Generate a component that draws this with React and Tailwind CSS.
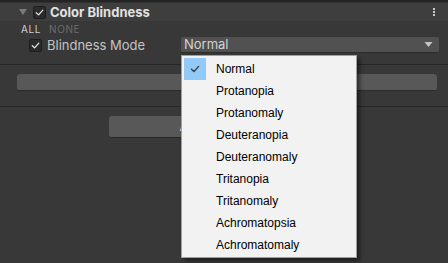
import React from 'react';

const MODES = [
  'Normal',
  'Protanopia',
  'Protanomaly',
  'Deuteranopia',
  'Deuteranomaly',
  'Tritanopia',
  'Tritanomaly',
  'Achromatopsia',
  'Achromatomaly',
];

function Check({ className = '' }) {
  return (
    <svg viewBox="0 0 12 12" className={className} fill="none">
      <path d="M2.5 6.2 L5 8.6 L9.6 3.4" stroke="currentColor" strokeWidth="1.4" strokeLinecap="round" strokeLinejoin="round" />
    </svg>
  );
}

function Toggle() {
  return (
    <div className="w-[13px] h-[13px] rounded-[2px] bg-[#2b2b2b] border border-[#1e1e1e] flex items-center justify-center text-[#e4e4e4]">
      <Check className="w-[11px] h-[11px]" />
    </div>
  );
}

export default function App() {
  return (
    <div className="relative w-[448px] h-[263px] overflow-hidden bg-[#383838]" style={{ fontFamily: 'Inter, "Noto Sans", sans-serif' }}>
      {/* top rule */}
      <div className="h-[3px] bg-[#242424] border-b border-[#303030]" />

      {/* Header */}
      <div className="h-[18px] bg-[#3e3e3e] flex items-center">
        <div className="w-[19px]" />
        <svg viewBox="0 0 8 6" className="w-[8px] h-[6px] text-[#7a7a7a]">
          <path d="M0 0 H8 L4 6 Z" fill="currentColor" />
        </svg>
        <div className="w-[6px]" />
        <Toggle />
        <span className="ml-[4px] text-[13px] font-bold text-[#e2e2e2] leading-none">Color Blindness</span>
        <div className="ml-auto mr-[13px] flex flex-col gap-[1px]">
          <span className="w-[2px] h-[2px] bg-[#c8c8c8]" />
          <span className="w-[2px] h-[2px] bg-[#c8c8c8]" />
          <span className="w-[2px] h-[2px] bg-[#c8c8c8]" />
        </div>
      </div>

      {/* ALL / NONE */}
      <div className="h-[16px] flex items-center pl-[21px] gap-[8px] text-[10px] tracking-[0.06em] leading-none">
        <span className="text-[#cfcfcf]">ALL</span>
        <span className="text-[#6c6c6c]">NONE</span>
      </div>

      {/* Blindness Mode row */}
      <div className="h-[16px] flex items-center pl-[29px]">
        <Toggle />
        <span className="ml-[5px] text-[13px] text-[#c4c4c4] leading-none w-[130px]">Blindness Mode</span>
        <div className="ml-auto mr-[9px] w-[258px] h-[16px] rounded-[2px] bg-[#515151] border-b border-[#2a2a2a] flex items-center pl-[3px] pr-[6px]">
          <span className="text-[13px] text-[#d4d4d4] leading-none">Normal</span>
          <svg viewBox="0 0 8 5" className="ml-auto w-[9px] h-[5px] text-[#c4c4c4]">
            <path d="M0 0 H8 L4 5 Z" fill="currentColor" />
          </svg>
        </div>
      </div>

      <div className="h-[11px]" />
      <div className="h-px bg-[#262626]" />

      {/* wide field */}
      <div className="pt-[9px] pb-[15px] pl-[17px] pr-[11px]">
        <div className="h-[17px] rounded-[3px] bg-[#585858] border-b border-[#2a2a2a]" />
      </div>

      <div className="h-px bg-[#262626]" />

      {/* button */}
      <div className="pt-[9px] flex justify-center">
        <div className="w-[230px] h-[22px] rounded-[3px] bg-[#585858] border-b border-[#262626] flex items-center justify-center text-[13px] text-[#e0e0e0] leading-none">
          Apply Settings
        </div>
      </div>

      {/* dropdown popup */}
      <div
        className="absolute left-[181px] top-[55px] w-[176px] h-[203px] bg-[#f2f2f2] border border-[#a0a0a0] pt-[2px] px-[2px] shadow-[3px_3px_4px_rgba(0,0,0,0.45)]"
        style={{ fontFamily: '"Liberation Sans", Arial, sans-serif' }}
      >
        {MODES.map((m, i) => (
          <div key={m} className="h-[22px] flex items-center">
            <div className={`w-[22px] h-[22px] flex items-center justify-center ${i === 0 ? 'bg-[#91c9f7]' : ''}`}>
              {i === 0 && <Check className="w-[12px] h-[12px] text-[#3a3a3a]" />}
            </div>
            <span className="ml-[10px] text-[12px] text-black leading-none">{m}</span>
          </div>
        ))}
      </div>
    </div>
  );
}
